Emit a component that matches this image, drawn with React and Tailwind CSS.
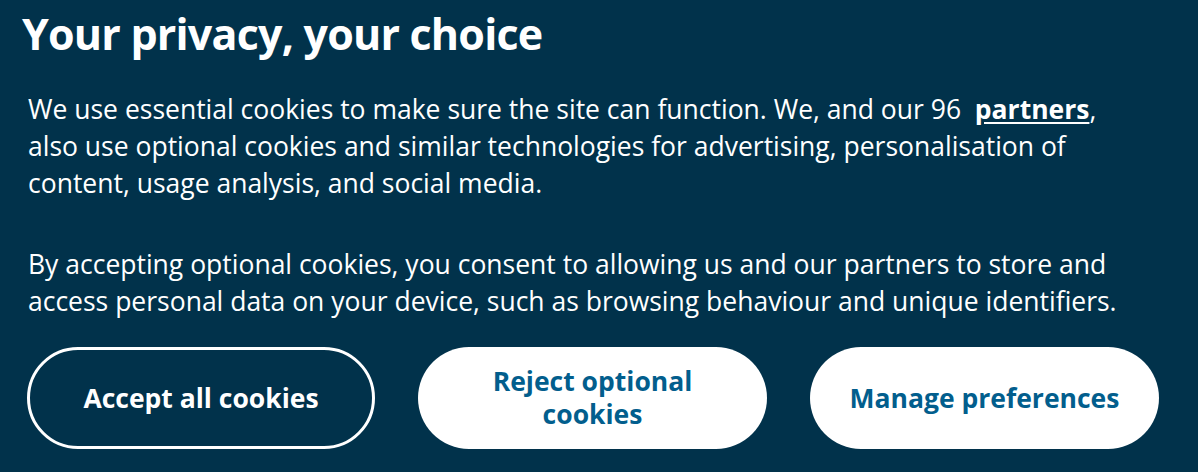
import React from 'react';

export default function App() {
  return (
    <div className="w-[1198px] h-[472px] bg-[#01324b] text-white px-[22px] pt-[6px] font-['Open_Sans',sans-serif]">
      {/* Heading */}
      <h2 className="text-[43px] font-bold leading-[56px] tracking-[-0.8px]">Your privacy, your choice</h2>

      {/* Copy */}
      <div className="pl-[6px] w-[1122px] mt-[29px] text-[26.5px] leading-[37px]">
        <p>
          We use essential cookies to make sure the site can function. We, and our 96&nbsp;{' '}
          <a href="#" className="font-bold underline underline-offset-[3px]">partners</a>, also use optional
          cookies and similar technologies for advertising, personalisation of content, usage analysis, and social media.
        </p>
        <p className="mt-[44px]">
          By accepting optional cookies, you consent to allowing us and our partners to store and access personal data
          on your device, such as browsing behaviour and unique identifiers.
        </p>
      </div>

      {/* Actions */}
      <div className="flex gap-[43px] pl-[5px] mt-[27px]">
        <button className="w-[348px] h-[102px] rounded-full border-[3px] border-white bg-transparent text-white text-[26.5px] font-bold leading-[33px] px-[34px]">
          Accept all cookies
        </button>
        <button className="w-[349px] h-[102px] rounded-full bg-white text-[#025e8d] text-[26.5px] font-bold leading-[33px] px-[34px]">
          Reject optional cookies
        </button>
        <button className="w-[349px] h-[102px] rounded-full bg-white text-[#025e8d] text-[26.5px] font-bold leading-[33px] px-[34px]">
          Manage preferences
        </button>
      </div>
    </div>
  );
}
